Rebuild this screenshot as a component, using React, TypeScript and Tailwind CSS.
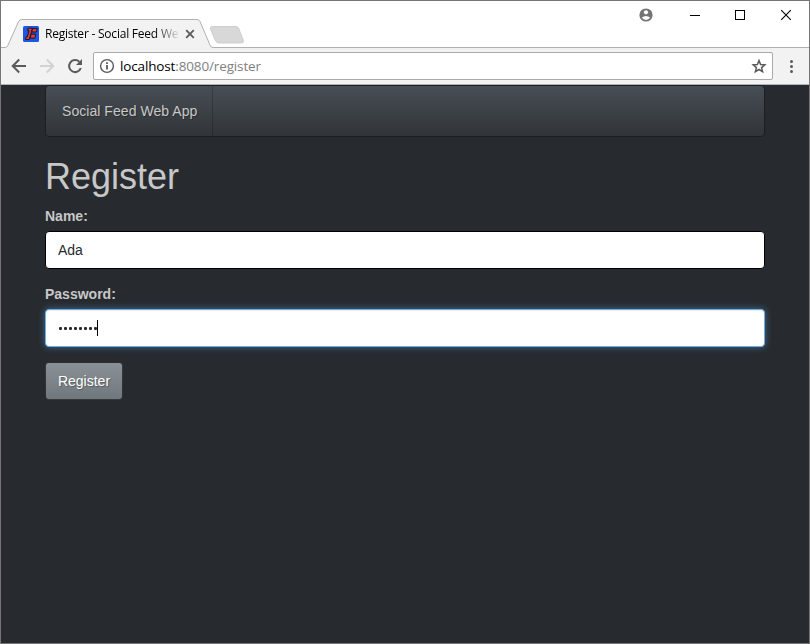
function TabStrip() {
  return (
    <div className="relative h-[47px] shrink-0 bg-white">
      <svg className="absolute inset-0" width="808" height="47" viewBox="1 1 808 47" fill="none">
        <path d="M1 48V47.5H5.5Q7 47.5 7.8 45.5L18.6 21.5Q19.5 19.5 21.5 19.5H197Q199 19.5 200 21.5L210.2 45.5Q211 47.5 213 47.5H809V48Z" fill="#f2f2f2" />
        <path d="M1 47.5H5.5Q7 47.5 7.8 45.5L18.6 21.5Q19.5 19.5 21.5 19.5H197Q199 19.5 200 21.5L210.2 45.5Q211 47.5 213 47.5H809" stroke="#b0b0b0" />
        <path d="M212 26.5H236Q238 26.5 238.8 28.5L243.2 40Q244 43 241.5 43H218.5Q216.5 43 215.6 41L210.5 29Q210 26.5 212 26.5Z" fill="#d8d8d8" stroke="#c6c6c6" strokeWidth=".8" />
        <rect x="23" y="26" width="16" height="16" rx="1.5" fill="#1f55e0" />
        <path d="M28.2 28.2h4.3l-3.3 11.3h-3.7l.6-2.6h1.2l1.8-6.3h-1.6z" fill="#ed3b24" stroke="#15163c" strokeWidth="1" />
        <path d="M32.6 28.6h4.6l-.8 3.4h-4.7zM31.2 34.2h4.6l-1 4h-4.7z" fill="#ed3b24" stroke="#15163c" strokeWidth="1" />
        <path d="m186.2 30.2 7.6 7.6m0-7.6-7.6 7.6" stroke="#5a5a5a" strokeWidth="1.8" />
        <circle cx="646" cy="15" r="6.6" fill="#737373" />
        <circle cx="646" cy="12.3" r="2.1" fill="white" />
        <path d="M641.8 17.6q4.2-3.4 8.4 0q-1.6 2.4-4.2 2.4t-4.2-2.4z" fill="white" />
        <path d="M690 15.5h10M735.5 10.5h9v9h-9z" stroke="#000" shapeRendering="crispEdges" />
        <path d="m781.2 10.2 9.6 9.6m0-9.6-9.6 9.6" stroke="#000" strokeWidth="1.1" />
      </svg>
      <div className="absolute left-[44px] top-[24px] whitespace-nowrap bg-linear-to-r from-black from-82% to-black/10 bg-clip-text font-['Open_Sans',sans-serif] text-[12px] leading-[18px] tracking-[-0.22px] text-transparent">
        Register - Social Feed We
      </div>
    </div>
  );
}

function Toolbar() {
  return (
    <div className="flex h-[37px] shrink-0 items-center border-b border-[#b3b3b3] bg-[#f2f2f2]">
      <svg width="92" height="36" viewBox="1 48 92 36" fill="none" strokeWidth="2" className="shrink-0">
        <path d="M26 66H13.2M19.2 59.5 12.7 66l6.5 6.5" stroke="#5a5a5a" />
        <path d="M40 66h12.8M46.8 59.5l6.5 6.5-6.5 6.5" stroke="#d2d2d2" />
        <path d="M79.3 61.8A6 6 0 1 0 80.8 68" stroke="#5a5a5a" />
        <path d="M82 59v6h-6z" fill="#5a5a5a" />
      </svg>
      <div className="flex h-[28px] w-[680px] shrink-0 items-center rounded-[2px] border border-[#a9a9a9] bg-white pl-[5px] pr-[5px]">
        <svg width="16" height="16" viewBox="0 0 16 16" fill="none" stroke="#5a5a5a">
          <circle cx="8" cy="8" r="6.4" strokeWidth="1.4" />
          <path d="M8 7v4.5M8 4.3v1.7" strokeWidth="1.8" />
        </svg>
        <div className="ml-[5px] flex-1 font-['Open_Sans',sans-serif] text-[13.5px] leading-[20px] tracking-[-0.14px] text-[#808080]">
          <span className="text-black">localhost</span>:8080/register
        </div>
        <svg width="16" height="16" viewBox="0 0 16 16" fill="none">
          <path d="m8 2.6 1.6 3.9 4.2.3-3.2 2.8 1 4.1L8 11.5l-3.6 2.2 1-4.1-3.2-2.8 4.2-.3z" stroke="#5a5a5a" strokeWidth="1.5" />
        </svg>
      </div>
      <svg width="36" height="36" viewBox="773 48 36 36" fill="#5a5a5a">
        <circle cx="791.5" cy="61.5" r="1.5" />
        <circle cx="791.5" cy="66.5" r="1.5" />
        <circle cx="791.5" cy="71.5" r="1.5" />
      </svg>
    </div>
  );
}

function RegisterPage() {
  return (
    <main className="flex-1 bg-[#272b30] pl-[44px] pr-[44px] font-['Liberation_Sans',Arial,sans-serif] text-[14px] leading-[20px] text-[#c8c8c8]">
      <nav className="flex h-[52px] rounded-[4px] border border-[#1c1e22] bg-[linear-gradient(#484e55,#3a3f44_60%,#313539)] [text-shadow:1px_1px_1px_rgba(0,0,0,0.3)]">
        <a className="w-[167px] whitespace-nowrap border-r border-black/20 pl-[16px] pt-[15px] tracking-[0.05px]">Social Feed Web App</a>
      </nav>
      <h1 className="mb-[10px] mt-[20px] h-[39px] text-[36px] font-normal leading-[39px]">Register</h1>
      <form>
        <label htmlFor="name" className="mb-[5px] block font-bold">Name:</label>
        <input id="name" defaultValue="Ada" className="mb-[15px] block h-[38px] w-full rounded-[4px] border border-black bg-white px-[12px] text-[#272b30] outline-none" />
        <label className="mb-[5px] block font-bold">Password:</label>
        <div className="mb-[15px] flex h-[38px] items-center rounded-[4px] border border-[#66afe9] bg-white pl-[12px] shadow-[inset_0_1px_1px_rgba(0,0,0,.075),0_0_7px_rgba(102,175,233,.5)]">
          <span className="flex gap-[1px]">
            {Array.from({ length: 8 }, (_, i) => (
              <i key={i} className="my-auto ml-px size-[3px] rounded-[1px] bg-[#272b30]" />
            ))}
          </span>
          <span className="h-[16px] w-px bg-black" />
        </div>
        <button type="button" className="block h-[38px] w-[78px] rounded-[4px] border border-black/60 bg-[linear-gradient(#8a9196,#7a8288_60%,#70787d)] text-white [text-shadow:1px_1px_1px_rgba(0,0,0,0.3)]">Register</button>
      </form>
    </main>
  );
}

export default function App() {
  return (
    <div className="flex h-[644px] w-[810px] flex-col overflow-hidden border border-[#767676]">
      <TabStrip />
      <Toolbar />
      <RegisterPage />
    </div>
  );
}
